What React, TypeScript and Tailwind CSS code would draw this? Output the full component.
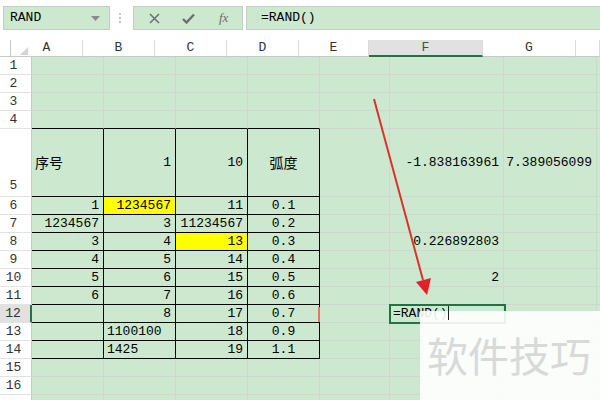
import React from 'react';

type Cell = { v?: string; al?: 'l' | 'r' | 'c'; y?: boolean; cjk?: boolean };

const COLS = ['w-[72px]', 'w-[72px]', 'w-[72px]', 'w-[72px]', 'w-[70px]', 'w-[114px]', 'w-[93px]', 'w-[24px]'];
const LETTERS = ['A', 'B', 'C', 'D', 'E', 'F', 'G', ''];

const r = (v: string): Cell => ({ v, al: 'r' });
const c = (v: string): Cell => ({ v, al: 'c' });
const l = (v: string): Cell => ({ v, al: 'l' });
const e: Cell = {};

const rows: { n: string; tall?: boolean; cells: Cell[] }[] = [
  { n: '1', cells: [] },
  { n: '2', cells: [] },
  { n: '3', cells: [] },
  { n: '4', cells: [] },
  {
    n: '5',
    tall: true,
    cells: [
      { v: '序号', al: 'l', cjk: true },
      r('1'),
      r('10'),
      { v: '弧度', al: 'c', cjk: true },
      e,
      r('-1.838163961'),
      r('7.389056099'),
    ],
  },
  { n: '6', cells: [r('1'), { v: '1234567', al: 'r', y: true }, r('11'), c('0.1')] },
  { n: '7', cells: [r('1234567'), r('3'), r('11234567'), c('0.2')] },
  { n: '8', cells: [r('3'), r('4'), { v: '13', al: 'r', y: true }, c('0.3'), e, r('0.226892803')] },
  { n: '9', cells: [r('4'), r('5'), r('14'), c('0.4')] },
  { n: '10', cells: [r('5'), r('6'), r('15'), c('0.5'), e, r('2')] },
  { n: '11', cells: [r('6'), r('7'), r('16'), c('0.6')] },
  { n: '12', cells: [e, r('8'), r('17'), c('0.7'), e, l('=RAND()')] },
  { n: '13', cells: [e, l('1100100'), r('18'), c('0.9')] },
  { n: '14', cells: [e, l('1425'), r('19'), c('1.1')] },
  { n: '15', cells: [] },
  { n: '16', cells: [] },
  { n: '', cells: [] },
];

const alignClass = { l: 'justify-start pl-[3px]', r: 'justify-end pr-[4px]', c: 'justify-center' };

export default function App() {
  return (
    <div className="relative w-[600px] h-[400px] overflow-hidden bg-white text-[13px] text-black font-['Liberation_Mono','Noto_Sans_CJK_SC',monospace]">
      {/* formula bar */}
      <div className="flex items-start h-[40px] pt-[6px] pl-[3px]">
        <div className="flex items-center justify-between w-[107px] h-[24px] bg-[#cce8cf] border border-[#c2cdc3] pl-[6px] pr-[9px]">
          <span>RAND</span>
          <svg width="9" height="5" viewBox="0 0 9 5">
            <polygon points="0,0 9,0 4.5,5" fill="#8a8a8a" />
          </svg>
        </div>
        <svg className="ml-[8px] mt-[6px]" width="4" height="12" viewBox="0 0 4 12">
          <circle cx="2" cy="2" r="1.1" fill="#b4b4b4" />
          <circle cx="2" cy="6" r="1.1" fill="#b4b4b4" />
          <circle cx="2" cy="10" r="1.1" fill="#b4b4b4" />
        </svg>
        <div className="flex items-center w-[110px] h-[24px] ml-[11px] bg-[#cce8cf] border border-[#c2cdc3] text-[#6e6e6e]">
          <svg className="ml-[15px]" width="11" height="11" viewBox="0 0 11 11">
            <path d="M1 1 L10 10 M10 1 L1 10" stroke="#6e6e6e" strokeWidth="1.5" />
          </svg>
          <svg className="ml-[22px]" width="13" height="11" viewBox="0 0 13 11">
            <path d="M1 6 L4.5 9.5 L12 1.5" stroke="#6e6e6e" strokeWidth="2.4" fill="none" />
          </svg>
          <span className="ml-[24px] italic text-[13px] font-['Liberation_Serif',serif]">fx</span>
        </div>
        <div className="flex items-center flex-1 h-[24px] ml-[3px] bg-[#cce8cf] border border-r-0 border-[#c2cdc3] pl-[14px]">
          =RAND()
        </div>
      </div>

      {/* column headers */}
      <div className="flex h-[17px]">
        <div className="relative w-[32px] h-full border-r border-b border-[#c8c8c8]">
          <svg className="absolute left-[20px] top-[7px]" width="8" height="8" viewBox="0 0 8 8">
            <polygon points="8,0 8,8 0,8" fill="#d4d4d4" />
          </svg>
        </div>
        {LETTERS.map((ch, i) => (
          <div
            key={i}
            className={`${COLS[i]} shrink-0 flex items-center justify-center h-full border-r border-[#dadada] ${
              ch === 'F'
                ? 'bg-[#e1e1e1] border-b-2 border-b-[#217346] text-[#21603a]'
                : 'border-b border-b-[#c8c8c8] text-[#333]'
            }`}
          >
            {ch}
          </div>
        ))}
      </div>

      {/* rows */}
      {rows.map((row, ri) => {
        const rowNo = ri + 1;
        const inTable = rowNo >= 5 && rowNo <= 14;
        return (
          <div key={ri} className={`flex ${row.tall ? 'h-[68px]' : 'h-[18px]'}`}>
            <div
              className={`w-[32px] shrink-0 flex justify-center pr-[4px] border-b border-[#e2e2e2] text-[#333] ${
                row.tall ? 'items-end pb-[1px]' : 'items-center'
              } ${
                rowNo === 12
                  ? 'bg-[#e1e1e1] border-r-2 border-r-[#217346] text-[#2b4d36]'
                  : 'bg-white border-r border-r-[#c8c8c8]'
              }`}
            >
              {row.n}
            </div>
            {COLS.map((w, ci) => {
              const cell = row.cells[ci] || e;
              const tableCol = ci <= 3;
              const black = inTable && tableCol;
              const bottomBlack = tableCol && (inTable || rowNo === 4);
              return (
                <div
                  key={ci}
                  className={`${w} shrink-0 flex items-center whitespace-nowrap overflow-visible border-r border-b ${
                    black ? 'border-r-black' : 'border-r-[#d4d4d4]'
                  } ${bottomBlack ? 'border-b-black' : 'border-b-[#d4d4d4]'} ${
                    cell.y ? 'bg-[#ffff00]' : 'bg-[#cce8cf]'
                  } ${cell.al ? alignClass[cell.al] : ''} ${cell.cjk ? 'text-[14px] font-[Noto_Sans_CJK_SC,sans-serif]' : ''}`}
                >
                  {cell.v}
                </div>
              );
            })}
          </div>
        );
      })}

      {/* selected cell F12 */}
      <div className="absolute left-[389px] top-[304px] w-[117px] h-[20px] border-2 border-[#217346]" />
      <div className="absolute left-[318px] top-[307px] w-[2px] h-[15px] bg-[#e5775c]" />

      {/* arrow */}
      <svg className="absolute left-0 top-0 pointer-events-none" width="600" height="400" viewBox="0 0 600 400">
        <line x1="374" y1="99" x2="423" y2="280" stroke="#d8342c" strokeWidth="2" />
        <polygon points="427,295 416,282 431,278" fill="#e3202a" />
      </svg>

      {/* watermark */}
      <div className="absolute left-[420px] top-[311px] right-0 bottom-0 bg-white/90 flex items-center pl-[7px] pb-[2px]">
        <span className="text-[41px] leading-none text-[#d9d9d9] font-['Noto_Sans_CJK_SC',sans-serif]">软件技巧</span>
      </div>
      <div className="absolute left-[448px] top-[306px] w-[1px] h-[14px] bg-[#222]" />
    </div>
  );
}
